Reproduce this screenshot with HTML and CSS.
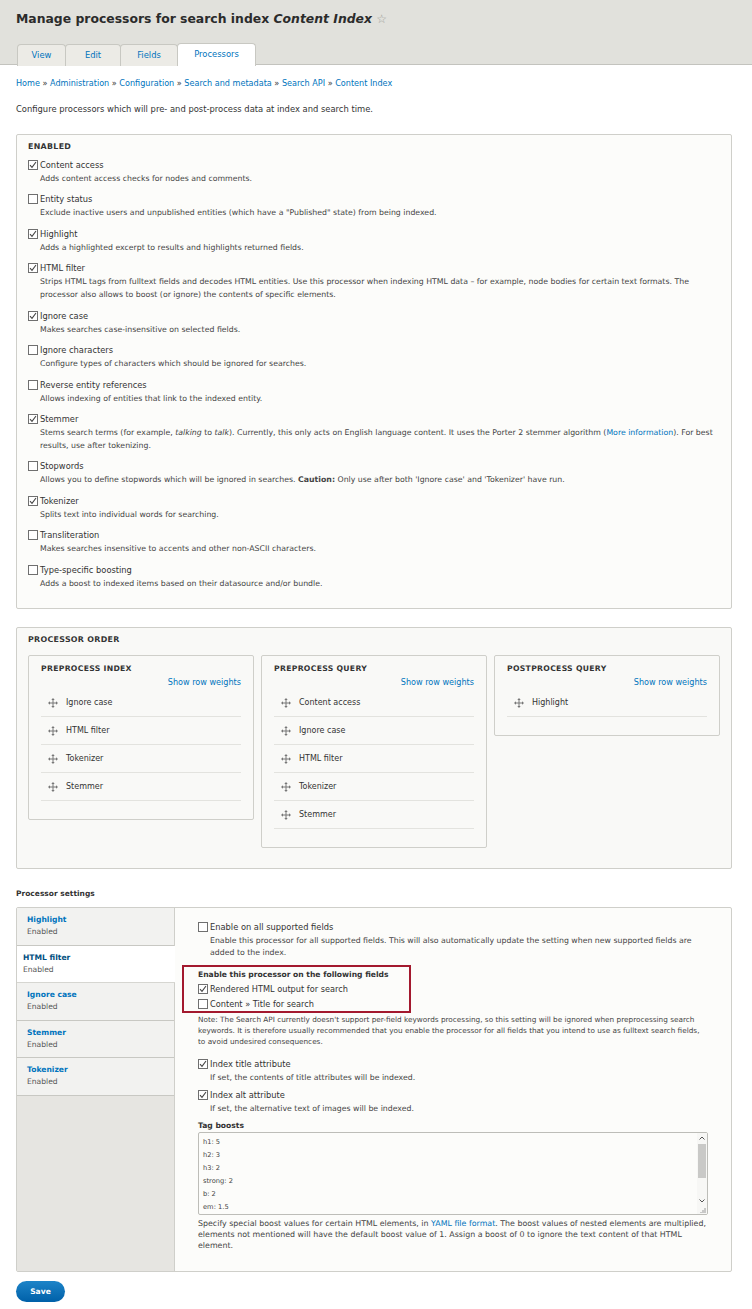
FILE: index.html
```html
<!DOCTYPE html>
<html lang="en">
<head>
    <meta charset="UTF-8">
    <title>Manage processors for search index Content Index</title>
    <link rel="stylesheet" href="styles.css">
</head>
<body>
    <div class="header">
        <h1 class="page-title">Manage processors for search index <em>Content Index</em> <span class="star">☆</span></h1>
        <ul class="tabs">
            <li class="t-view"><a href="#">View</a></li>
            <li class="t-edit"><a href="#">Edit</a></li>
            <li class="t-fields"><a href="#">Fields</a></li>
            <li class="t-proc active"><a href="#">Processors</a></li>
        </ul>
    </div>

    <div class="content">
        <div class="breadcrumb">
            <a href="#">Home</a> » <a href="#">Administration</a> » <a href="#">Configuration</a> » <a href="#">Search and metadata</a> » <a href="#">Search API</a> » <a href="#">Content Index</a>
        </div>

        <p class="intro">Configure processors which will pre- and post-process data at index and search time.</p>

        <div class="panel enabled">
            <div class="panel-title">ENABLED</div>

            <div class="item">
                <div class="item-label"><span class="cb on"></span>Content access</div>
                <div class="desc">Adds content access checks for nodes and comments.</div>
            </div>
            <div class="item">
                <div class="item-label"><span class="cb"></span>Entity status</div>
                <div class="desc">Exclude inactive users and unpublished entities (which have a "Published" state) from being indexed.</div>
            </div>
            <div class="item">
                <div class="item-label"><span class="cb on"></span>Highlight</div>
                <div class="desc">Adds a highlighted excerpt to results and highlights returned fields.</div>
            </div>
            <div class="item">
                <div class="item-label"><span class="cb on"></span>HTML filter</div>
                <div class="desc">Strips HTML tags from fulltext fields and decodes HTML entities. Use this processor when indexing HTML data – for example, node bodies for certain text formats. The processor also allows to boost (or ignore) the contents of specific elements.</div>
            </div>
            <div class="item">
                <div class="item-label"><span class="cb on"></span>Ignore case</div>
                <div class="desc">Makes searches case-insensitive on selected fields.</div>
            </div>
            <div class="item">
                <div class="item-label"><span class="cb"></span>Ignore characters</div>
                <div class="desc">Configure types of characters which should be ignored for searches.</div>
            </div>
            <div class="item">
                <div class="item-label"><span class="cb"></span>Reverse entity references</div>
                <div class="desc">Allows indexing of entities that link to the indexed entity.</div>
            </div>
            <div class="item">
                <div class="item-label"><span class="cb on"></span>Stemmer</div>
                <div class="desc">Stems search terms (for example, <i>talking</i> to <i>talk</i>). Currently, this only acts on English language content. It uses the Porter 2 stemmer algorithm (<a href="#">More information</a>). For best results, use after tokenizing.</div>
            </div>
            <div class="item">
                <div class="item-label"><span class="cb"></span>Stopwords</div>
                <div class="desc">Allows you to define stopwords which will be ignored in searches. <b>Caution:</b> Only use after both 'Ignore case' and 'Tokenizer' have run.</div>
            </div>
            <div class="item">
                <div class="item-label"><span class="cb on"></span>Tokenizer</div>
                <div class="desc">Splits text into individual words for searching.</div>
            </div>
            <div class="item">
                <div class="item-label"><span class="cb"></span>Transliteration</div>
                <div class="desc">Makes searches insensitive to accents and other non-ASCII characters.</div>
            </div>
            <div class="item">
                <div class="item-label"><span class="cb"></span>Type-specific boosting</div>
                <div class="desc">Adds a boost to indexed items based on their datasource and/or bundle.</div>
            </div>
        </div>

        <div class="panel order">
            <div class="panel-title">PROCESSOR ORDER</div>
            <div class="stages">
                <div class="stage">
                    <div class="stage-title">PREPROCESS INDEX</div>
                    <div class="weights"><a href="#">Show row weights</a></div>
                    <div class="row"><span class="drag"></span>Ignore case</div>
                    <div class="row"><span class="drag"></span>HTML filter</div>
                    <div class="row"><span class="drag"></span>Tokenizer</div>
                    <div class="row"><span class="drag"></span>Stemmer</div>
                </div>
                <div class="stage">
                    <div class="stage-title">PREPROCESS QUERY</div>
                    <div class="weights"><a href="#">Show row weights</a></div>
                    <div class="row"><span class="drag"></span>Content access</div>
                    <div class="row"><span class="drag"></span>Ignore case</div>
                    <div class="row"><span class="drag"></span>HTML filter</div>
                    <div class="row"><span class="drag"></span>Tokenizer</div>
                    <div class="row"><span class="drag"></span>Stemmer</div>
                </div>
                <div class="stage">
                    <div class="stage-title">POSTPROCESS QUERY</div>
                    <div class="weights"><a href="#">Show row weights</a></div>
                    <div class="row"><span class="drag"></span>Highlight</div>
                </div>
            </div>
        </div>

        <div class="settings-title">Processor settings</div>

        <div class="vtabs">
            <ul class="vtabs-menu">
                <li><a href="#">Highlight</a><span>Enabled</span></li>
                <li class="active"><a href="#">HTML filter</a><span>Enabled</span></li>
                <li><a href="#">Ignore case</a><span>Enabled</span></li>
                <li><a href="#">Stemmer</a><span>Enabled</span></li>
                <li><a href="#">Tokenizer</a><span>Enabled</span></li>
            </ul>

            <div class="vtabs-pane">
                <div class="item">
                    <div class="item-label"><span class="cb"></span>Enable on all supported fields</div>
                    <div class="desc">Enable this processor for all supported fields. This will also automatically update the setting when new supported fields are added to the index.</div>
                </div>

                <div class="fields-box">
                    <div class="fields-title">Enable this processor on the following fields</div>
                    <div class="field-opt"><span class="cb on"></span>Rendered HTML output for search</div>
                    <div class="field-opt"><span class="cb"></span>Content » Title for search</div>
                </div>
                <div class="note">Note: The Search API currently doesn't support per-field keywords processing, so this setting will be ignored when preprocessing search keywords. It is therefore usually recommended that you enable the processor for all fields that you intend to use as fulltext search fields, to avoid undesired consequences.</div>

                <div class="item attr first">
                    <div class="item-label"><span class="cb on"></span>Index title attribute</div>
                    <div class="desc">If set, the contents of title attributes will be indexed.</div>
                </div>
                <div class="item attr">
                    <div class="item-label"><span class="cb on"></span>Index alt attribute</div>
                    <div class="desc">If set, the alternative text of images will be indexed.</div>
                </div>

                <div class="boost-label">Tag boosts</div>
                <div class="boosts">
                    <textarea class="boosts-text" readonly>h1: 5
h2: 3
h3: 2
strong: 2
b: 2
em: 1.5
u: 1.5</textarea>
                    <div class="scrollbar">
                        <span class="sb-up"></span>
                        <span class="sb-thumb"></span>
                        <span class="sb-down"></span>
                        <span class="sb-grip"></span>
                    </div>
                </div>
                <div class="help">Specify special boost values for certain HTML elements, in <a href="#">YAML file format</a>. The boost values of nested elements are multiplied, elements not mentioned will have the default boost value of 1. Assign a boost of 0 to ignore the text content of that HTML element.</div>
            </div>
        </div>

        <button class="save">Save</button>
    </div>
</body>
</html>
```

FILE: styles.css
```css
body{
    margin: 0;
    background-color: #ffffff;
    color: #333333;
    font-family: "DejaVu Sans", Verdana, sans-serif;
    font-size: 8.2px;
}

a{
    color: #0074bd;
    text-decoration: none;
}

/* header + tabs */
.header{
    background-color: #e1e1dc;
    padding: 0 16px;
    border-bottom: 1px solid #c3c3be;
    height: 65px;
    box-sizing: border-box;
}

.page-title{
    margin: 0;
    padding-top: 10px;
    height: 34px;
    box-sizing: border-box;
    font-size: 12.4px;
    line-height: 18px;
    font-weight: bold;
    color: #2b2b2b;
}

.star{
    color: #a09f99;
    font-weight: normal;
    font-size: 12px;
}

.tabs{
    list-style: none;
    margin: 0;
    padding: 0 0 0 1px;
    display: flex;
    height: 31px;
    align-items: flex-end;
}

.tabs li{
    height: 22px;
    box-sizing: border-box;
    border: 1px solid #c8c8c2;
    border-bottom: none;
    background-color: #ecebe6;
    margin-right: -1px;
    border-radius: 4px 4px 0 0;
    position: relative;
    top: 1px;
    text-align: center;
}

.tabs li a{
    display: block;
    line-height: 21px;
    font-size: 8.4px;
}

.t-view{ width: 49px; }
.t-edit{ width: 56px; }
.t-fields{ width: 58px; }
.t-proc{ width: 79px; }

.tabs li.active{
    background-color: #ffffff;
    height: 23px;
}

/* page body */
.content{
    padding: 0 20px 8px 16px;
}

.breadcrumb{
    padding-top: 12px;
    line-height: 12px;
    font-size: 8.1px;
}

.intro{
    margin: 14px 0 0;
    line-height: 12px;
    font-size: 8.4px;
}

.panel{
    background-color: #fcfcfa;
    border: 1px solid #cfcfca;
    border-radius: 2px;
}

.panel-title{
    font-weight: bold;
    line-height: 12px;
    font-size: 7.9px;
    letter-spacing: 0.3px;
}

.enabled{
    margin-top: 19px;
    padding: 6px 11px 12px;
}

.enabled .panel-title{
    margin-bottom: 4px;
}

.item{
    padding-bottom: 5.9px;
}

.item-label{
    line-height: 16px;
    font-size: 8.3px;
    display: flex;
    align-items: center;
}

.desc{
    line-height: 12.6px;
    padding-left: 12px;
    font-size: 7.8px;
    color: #444;
}

.cb{
    width: 10px;
    height: 10px;
    margin-right: 2px;
    flex-shrink: 0;
    box-sizing: border-box;
    border: 1px solid #6f6f6f;
    background-color: #ffffff;
    background-repeat: no-repeat;
    background-position: center;
}

.cb.on{
    background-image: url("data:image/svg+xml,%3Csvg xmlns='http://www.w3.org/2000/svg' width='8' height='8' viewBox='0 0 8 8'%3E%3Cpath d='M1 4.2 L3 6.3 L7 1' fill='none' stroke='%23444' stroke-width='1.1'/%3E%3C/svg%3E");
}

/* processor order */
.order{
    margin-top: 18px;
    padding: 6px 11px 20px;
    background-color: #f9f9f7;
}

.stages{
    margin-top: 9px;
    display: flex;
    align-items: flex-start;
    gap: 7px;
}

.stage{
    flex: 1;
    background-color: #f9f9f7;
    border: 1px solid #cfcfca;
    border-radius: 2px;
    padding: 7px 12px 18px;
}

.stage-title{
    font-weight: bold;
    line-height: 12px;
    font-size: 7.7px;
    letter-spacing: 0.3px;
}

.weights{
    text-align: right;
    line-height: 14px;
    font-size: 8.1px;
}

.row{
    height: 28px;
    box-sizing: border-box;
    border-bottom: 1px solid #e3e3df;
    display: flex;
    align-items: center;
    padding-left: 7px;
    font-size: 8px;
}

.drag{
    width: 10px;
    height: 10px;
    margin-right: 8px;
    background-image: url("data:image/svg+xml,%3Csvg xmlns='http://www.w3.org/2000/svg' width='10' height='10' viewBox='0 0 10 10'%3E%3Cpath d='M5 1v8M1 5h8' stroke='%23777' stroke-width='1'/%3E%3Cpath d='M5 0L3.3 2h3.4zM5 10L3.3 8h3.4zM0 5l2-1.7v3.4zM10 5L8 3.3v3.4z' fill='%23777'/%3E%3C/svg%3E");
}

/* processor settings */
.settings-title{
    margin-top: 19px;
    font-weight: bold;
    line-height: 12px;
    font-size: 7.5px;
}

.vtabs{
    margin-top: 7px;
    display: flex;
    border: 1px solid #cfcfca;
    border-radius: 2px;
    background-color: #fcfcfa;
}

.vtabs-menu{
    list-style: none;
    margin: 0;
    padding: 0;
    width: 157px;
    flex-shrink: 0;
    background-color: #e6e5e1;
    border-right: 1px solid #cfcfca;
}

.vtabs-menu li{
    background-color: #f2f2f0;
    border-bottom: 1px solid #c8c8c3;
    padding: 6px 10px 7px;
    height: 37.6px;
    box-sizing: border-box;
}

.vtabs-menu li a{
    display: block;
    font-weight: bold;
    line-height: 12px;
    font-size: 7.6px;
}

.vtabs-menu li span{
    display: block;
    line-height: 12px;
    color: #555;
    font-size: 7.6px;
}

.vtabs-menu li.active{
    background-color: #ffffff;
    padding-left: 6px;
    margin-right: -1px;
    border-bottom-color: #d6d6d1;
}

.vtabs-menu li.active a{
    color: #004f80;
}

.vtabs-pane{
    flex: 1;
    padding: 11px 23px 20px;
}

.vtabs-pane .item{
    padding-bottom: 6px;
}

.vtabs-pane .desc{
    line-height: 12px;
}

.fields-box{
    width: 229px;
    box-sizing: border-box;
    margin-left: -16px;
    border: 2px solid #a3192e;
    padding: 2px 14px 0;
}

.fields-title{
    font-weight: bold;
    line-height: 12px;
    font-size: 7.6px;
}

.field-opt{
    height: 15px;
    display: flex;
    align-items: center;
    font-size: 8.2px;
}

.note{
    margin-top: 1px;
    line-height: 11px;
    font-size: 7.3px;
    color: #444;
}

.vtabs-pane .attr{
    padding-bottom: 3px;
}

.vtabs-pane .attr.first{
    margin-top: 9px;
}

.boost-label{
    margin-top: 2px;
    font-weight: bold;
    line-height: 12px;
    font-size: 7.6px;
}

.boosts{
    display: flex;
    height: 83px;
    box-sizing: border-box;
    border: 1px solid #bdbdb8;
    border-radius: 2px;
    background-color: #fcfcfa;
}

.boosts-text{
    flex: 1;
    margin: 0;
    padding: 3px 4px;
    border: none;
    outline: none;
    resize: none;
    overflow: hidden;
    font-family: "DejaVu Sans", Verdana, sans-serif;
    font-size: 6.7px;
    line-height: 13px;
    color: #444;
    background-color: transparent;
}

.scrollbar{
    width: 10px;
    display: flex;
    flex-direction: column;
    background-color: #f7f7f5;
}

.sb-up,
.sb-down{
    height: 10px;
    background-repeat: no-repeat;
    background-position: center;
}

.sb-up{
    background-image: url("data:image/svg+xml,%3Csvg xmlns='http://www.w3.org/2000/svg' width='6' height='4' viewBox='0 0 6 4'%3E%3Cpath d='M0.5 3.5L3 1L5.5 3.5' fill='none' stroke='%23555' stroke-width='1'/%3E%3C/svg%3E");
}

.sb-down{
    background-image: url("data:image/svg+xml,%3Csvg xmlns='http://www.w3.org/2000/svg' width='6' height='4' viewBox='0 0 6 4'%3E%3Cpath d='M0.5 0.5L3 3L5.5 0.5' fill='none' stroke='%23555' stroke-width='1'/%3E%3C/svg%3E");
}

.sb-thumb{
    height: 34px;
    margin: 1px 1px 0;
    background-color: #c9c9c7;
}

.sb-down{
    margin-top: auto;
}

.sb-grip{
    height: 8px;
    background-image: url("data:image/svg+xml,%3Csvg xmlns='http://www.w3.org/2000/svg' width='10' height='8' viewBox='0 0 10 8'%3E%3Cpath d='M8 2v5M6 4v3M4 6v1' stroke='%23999' stroke-width='1'/%3E%3C/svg%3E");
}

.help{
    margin-top: 3px;
    line-height: 11px;
    font-size: 7.9px;
    color: #444;
}

.save{
    margin-top: 9px;
    width: 49px;
    height: 21px;
    border: none;
    border-radius: 11px;
    background: linear-gradient(#1d84c8, #0060a8);
    color: #ffffff;
    font-family: "DejaVu Sans", Verdana, sans-serif;
    font-weight: bold;
    font-size: 7.6px;
}
```
